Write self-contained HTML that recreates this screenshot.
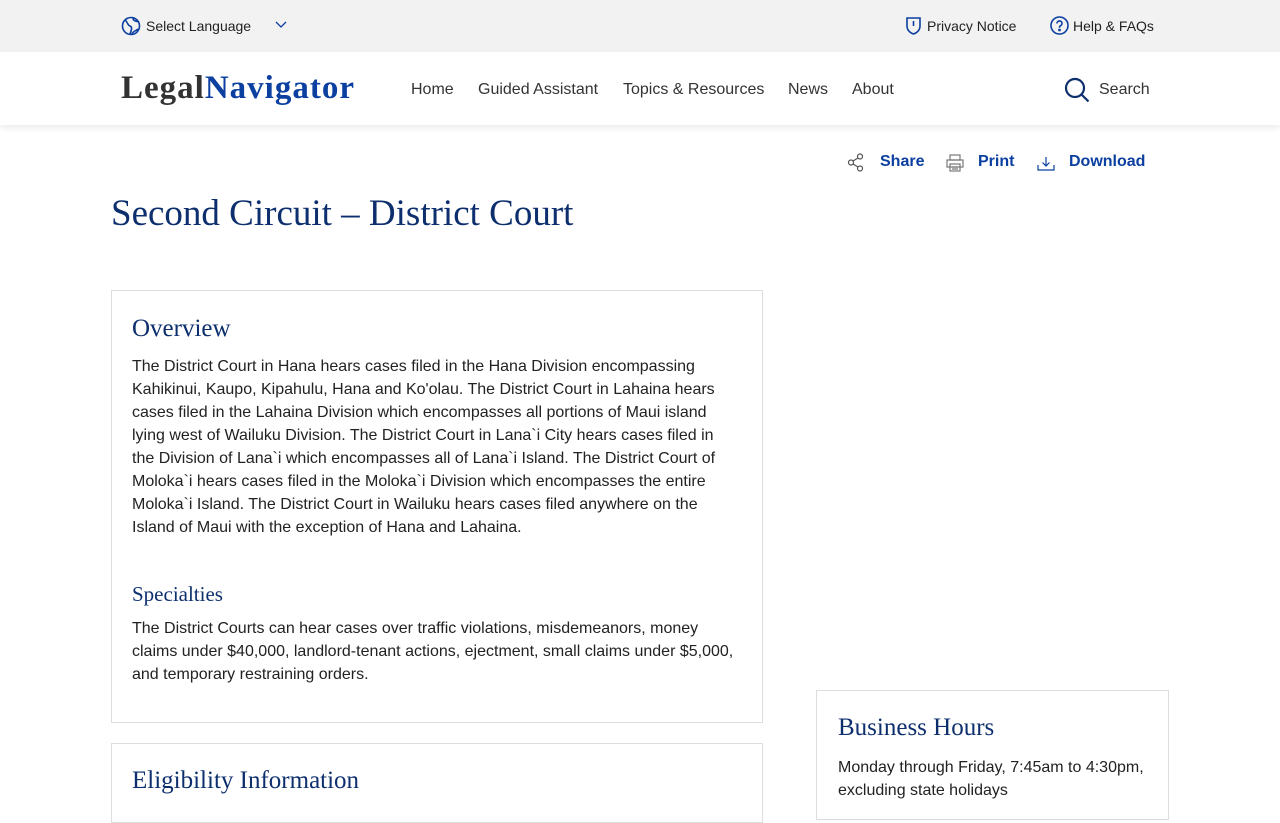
<!DOCTYPE html>
<html><head><meta charset="utf-8"><style>
*{box-sizing:border-box;margin:0;padding:0}
body{width:1280px;height:800px;overflow:hidden;background:#fff;font-family:"Liberation Sans",sans-serif;color:#222;position:relative}
.top{height:52px;background:#f2f2f2;position:relative;font-size:14px;color:#222}
.top span{position:absolute;top:18px}
.hdr{height:73px;background:#fff;position:relative;box-shadow:0 3px 6px rgba(0,0,0,.08)}
.logo{position:absolute;left:121px;top:70px;font-family:"Liberation Serif",serif;font-weight:bold;font-size:33px;color:#333;letter-spacing:1px}
.logo b{color:#0b3fa0}
.nav{position:absolute;top:81px;font-size:16px;color:#333}
.ser{font-family:"Liberation Serif",serif;color:#0d2f6e}
.card{position:absolute;border:1px solid #ddd;background:#fff}
p{font-size:16px;line-height:23px;color:#222}
.act{position:absolute;top:153px;font-weight:bold;font-size:16px;color:#0b3fa0}
</style></head><body>
<div class="top">
<svg style="position:absolute;left:121px;top:16px" width="20" height="20" viewBox="0 0 20 20" fill="none" stroke="#0b3fa0" stroke-width="1.6"><circle cx="10" cy="10" r="8.5"/><path d="M4 4c3 2 2 5 5 6s1 5 0 8M12 2c0 3 3 3 6 4M11 18c1-3 4-3 6-5"/></svg>
<span style="left:146px">Select Language</span>
<svg style="position:absolute;left:274px;top:20px" width="14" height="10" viewBox="0 0 14 10" fill="none" stroke="#0b3fa0" stroke-width="1.3"><path d="M2 2l5 5 5-5"/></svg>
<svg style="position:absolute;left:905px;top:16px" width="17" height="20" viewBox="0 0 17 20" fill="none" stroke="#0b3fa0" stroke-width="1.6"><path d="M2 2h13v8c0 4-3 7-6.5 8C5 17 2 14 2 10z"/><path d="M8.5 5v5"/></svg>
<span style="left:927px">Privacy Notice</span>
<svg style="position:absolute;left:1050px;top:16px" width="19" height="19" viewBox="0 0 19 19" fill="none" stroke="#0b3fa0" stroke-width="1.6"><circle cx="9.5" cy="9.5" r="8.5"/><path d="M7 7.5a2.5 2.5 0 1 1 3.5 2.2c-.8.4-1 1-1 2"/><circle cx="9.5" cy="14" r=".6" fill="#0b3fa0"/></svg>
<span style="left:1073px">Help &amp; FAQs</span>
</div>
<div class="hdr"></div>
<div class="logo">Legal<b>Navigator</b></div>
<div class="nav" style="left:411px">Home</div>
<div class="nav" style="left:478px">Guided Assistant</div>
<div class="nav" style="left:623px">Topics &amp; Resources</div>
<div class="nav" style="left:788px">News</div>
<div class="nav" style="left:852px">About</div>
<svg style="position:absolute;left:1064px;top:77px" width="26" height="26" viewBox="0 0 26 26" fill="none" stroke="#0d2f6e" stroke-width="2.2"><circle cx="11" cy="11" r="9"/><path d="M17.5 17.5l7 7"/></svg>
<div class="nav" style="left:1099px">Search</div>
<svg style="position:absolute;left:847px;top:153px" width="18" height="19" viewBox="0 0 18 19" fill="none" stroke="#555" stroke-width="1.2"><circle cx="4" cy="9.5" r="2.5"/><circle cx="13" cy="3.5" r="2.5"/><circle cx="13" cy="15.5" r="2.5"/><path d="M6 8l5-3M6 11l5 3"/></svg>
<div class="act" style="left:880px">Share</div>
<svg style="position:absolute;left:946px;top:154px" width="18" height="18" viewBox="0 0 18 18" fill="none" stroke="#777" stroke-width="1.2"><rect x="4" y="1" width="10" height="5"/><rect x="1" y="6" width="16" height="7"/><rect x="4" y="10" width="10" height="7"/><path d="M6 13h6M6 15h6"/></svg>
<div class="act" style="left:978px">Print</div>
<svg style="position:absolute;left:1037px;top:154px" width="18" height="18" viewBox="0 0 18 18" fill="none" stroke="#0b3fa0" stroke-width="1.2"><path d="M9 3v9M5.5 8.5L9 12l3.5-3.5M1 11v5h16v-5"/></svg>
<div class="act" style="left:1069px">Download</div>
<div class="ser" style="position:absolute;left:111px;top:192px;font-size:37px">Second Circuit – District Court</div>
<div class="card" style="left:111px;top:290px;width:652px;height:433px">
<div class="ser" style="position:absolute;left:20px;top:24px;font-size:25px">Overview</div>
<p style="position:absolute;left:20px;top:64px;width:608px">The District Court in Hana hears cases filed in the Hana Division encompassing Kahikinui, Kaupo, Kipahulu, Hana and Ko'olau. The District Court in Lahaina hears cases filed in the Lahaina Division which encompasses all portions of Maui island lying west of Wailuku Division. The District Court in Lana`i City hears cases filed in the Division of Lana`i which encompasses all of Lana`i Island. The District Court of Moloka`i hears cases filed in the Moloka`i Division which encompasses the entire Moloka`i Island. The District Court in Wailuku hears cases filed anywhere on the Island of Maui with the exception of Hana and Lahaina.</p>
<div class="ser" style="position:absolute;left:20px;top:291px;font-size:21px">Specialties</div>
<p style="position:absolute;left:20px;top:326px;width:608px">The District Courts can hear cases over traffic violations, misdemeanors, money claims under $40,000, landlord-tenant actions, ejectment, small claims under $5,000, and temporary restraining orders.</p>
</div>
<div class="card" style="left:111px;top:743px;width:652px;height:80px">
<div class="ser" style="position:absolute;left:20px;top:23px;font-size:25px">Eligibility Information</div>
</div>
<div class="card" style="left:816px;top:690px;width:353px;height:130px">
<div class="ser" style="position:absolute;left:21px;top:23px;font-size:25px">Business Hours</div>
<p style="position:absolute;left:21px;top:65px;width:320px">Monday through Friday, 7:45am to 4:30pm, excluding state holidays</p>
</div>
</body></html>
